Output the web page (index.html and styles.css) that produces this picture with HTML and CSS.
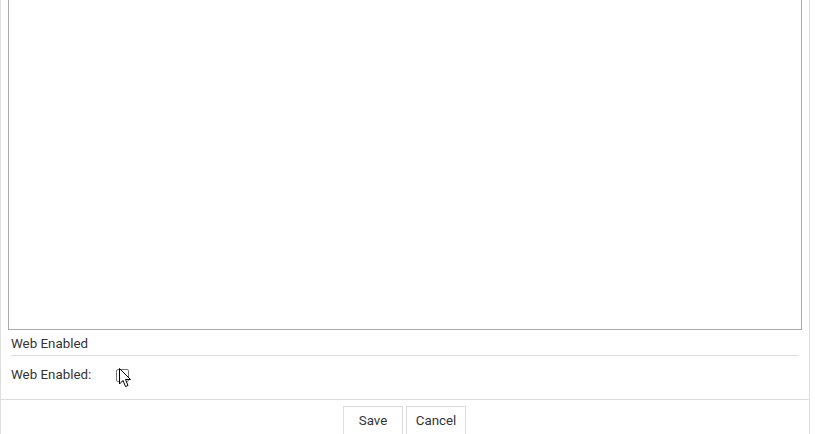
FILE: index.html
```html
<!DOCTYPE html>
<html>
<head>
<meta charset="utf-8">
<link rel="stylesheet" href="styles.css">
</head>
<body>
<div class="panel">
  <div class="content">
    <textarea class="notes"></textarea>
    <div class="section-title">Web Enabled</div>
    <div class="field">
      <span class="field-label">Web Enabled:</span>
      <span class="checkbox"></span>
      <svg class="cursor" width="13" height="20" viewBox="0 0 13 20"><path d="M0.5 0.5 L0.5 16 L4 12.5 L6.5 18.5 L9 17.5 L6.5 11.5 L11.5 11.5 Z" fill="#fff" stroke="#000" stroke-width="1" stroke-linejoin="miter"/></svg>
    </div>
  </div>
  <div class="footer">
    <button class="btn">Save</button>
    <button class="btn">Cancel</button>
  </div>
</div>
</body>
</html>
```
FILE: styles.css
```css
html, body {
  margin: 0;
  padding: 0;
  background: #fff;
  overflow: hidden;
}
body {
  font-family: Roboto, "Liberation Sans", sans-serif;
  font-size: 13.33px;
  color: #333;
}
.panel {
  width: 808px;
  border-left: 1px solid #ddd;
  border-right: 1px solid #ddd;
  margin-top: -20px;
  height: 480px;
}
.content {
  padding: 0 7px;
}
.notes {
  display: block;
  box-sizing: border-box;
  width: 794px;
  height: 350px;
  margin: 0;
  border: 1px solid #a9a9a9;
  resize: none;
  outline: none;
}
.section-title {
  margin: 0 3px;
  padding: 6px 0 3px;
  line-height: 16px;
  border-bottom: 1px solid #ddd;
}
.field {
  position: relative;
  display: flex;
  align-items: center;
  padding: 11px 3px 16px;
  line-height: 16px;
}
.field-label {
  width: 105px;
}
.checkbox {
  box-sizing: border-box;
  width: 13px;
  height: 13px;
  border: 1px solid #767676;
  border-radius: 2px;
  background: #fff;
}
.cursor {
  position: absolute;
  left: 111px;
  top: 12px;
}
.footer {
  border-top: 1px solid #ddd;
  padding: 6px 1px 0 0;
  display: flex;
  justify-content: center;
  gap: 3px;
}
.btn {
  box-sizing: border-box;
  width: 60px;
  height: 32px;
  padding: 6px 0 8px;
  line-height: 16px;
  font-family: Roboto, "Liberation Sans", sans-serif;
  font-size: 13.33px;
  color: #333;
  background: #fff;
  border: 1px solid #ddd;
  border-radius: 0;
}
```
